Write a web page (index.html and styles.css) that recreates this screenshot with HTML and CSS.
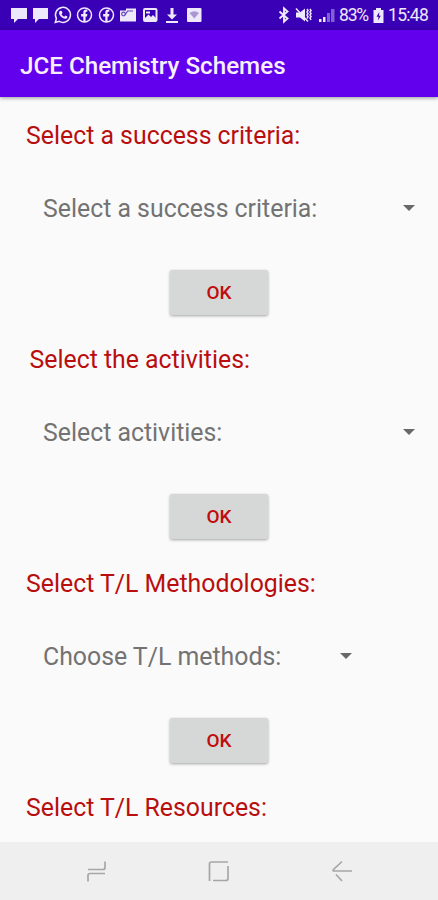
FILE: index.html
```html
<!DOCTYPE html>
<html lang="en">
<head>
<meta charset="utf-8">
<title>JCE Chemistry Schemes</title>
<link rel="stylesheet" href="styles.css">
</head>
<body>
<div class="screen">
  <header class="status">
    <div class="notices">
      <svg viewBox="0 0 22 20"><path class="fill" d="M3 3h16v11h-9l-4 4v-4H3z"/></svg>
      <svg viewBox="0 0 22 20"><path class="fill" d="M3 3h15v11H9l-4 4v-4H3z"/></svg>
      <svg viewBox="0 0 22 20"><path class="line" d="M3.300 17.500l1.100-4A7.500 7.500 0 1 1 7.300 16.400z"/><path class="fill" d="M8.300 5.800l1.500.2.7 2-1 1.200c.7 1.300 1.500 2 2.800 2.500l1.100-1.200 2 1c.1 1.500-1 2.300-2.200 2.300-3.200-.2-6.400-3.600-6.200-6.200.1-.8.6-1.500 1.300-1.800z"/></svg>
      <svg viewBox="0 0 22 20"><circle class="line" cx="10.500" cy="10" r="7"/><path class="fill" d="M9.300 17v-5.500H7.100V9h2.200V7.500c0-2.200 1.200-3.200 4-2.800v2c-1.500-.1-1.700.3-1.700 1V9h1.800l-.4 2.500h-1.400V17z"/></svg>
      <svg viewBox="0 0 22 20"><circle class="line" cx="10.500" cy="10" r="7"/><path class="fill" d="M9.300 17v-5.500H7.100V9h2.200V7.500c0-2.200 1.200-3.200 4-2.800v2c-1.500-.1-1.700.3-1.700 1V9h1.800l-.4 2.500h-1.400V17z"/></svg>
      <svg viewBox="0 0 22 20"><path class="fill" d="M2 5.500h6V3.500h10v13H2z"/><circle class="ink" cx="5.500" cy="9" r="1.800"/><path class="ink" d="M7 10l3-4.500M10 6h5"/></svg>
      <svg viewBox="0 0 22 20"><rect class="line thick" x="4" y="4" width="12.500" height="12" rx="1"/><path class="fill" d="M5 13l3.500-3.500 2.500 2.500 2-2 3.500 3.500v2H5zM6 6.500h4v2H6z"/></svg>
      <svg viewBox="0 0 22 20"><path class="fill" d="M8.500 3h3v6.500H15l-5 5-5-5h3.500zM4 16h12v2H4z"/></svg>
      <svg viewBox="0 0 22 20"><rect class="fill" x="3" y="3" width="14.500" height="14" rx="1"/><path class="signal" d="M5.500 8q4.800-3.500 9.500 0l-4.700 5.500z"/></svg>
    </div>
    <div class="system">
      <svg class="bt" viewBox="0 0 12 20"><path class="line bold" d="M1.500 6.500l8 7L6 16.700V3.300l3.500 3.200-8 7"/></svg>
      <svg class="mute" viewBox="0 0 17 20"><path class="fill" d="M1 7.500h4l5-4v13l-5-4H1z"/><path class="line" d="M1 3.500l12 13M12 4l1 1.500L12 7l1 1.500-1 1.500 1 1.500-1 2M15 4l1 1.500L15 7l1 1.500-1 1.500 1 1.500-1 1.500 1 2"/></svg>
      <svg class="cell" viewBox="0 0 17 20"><path class="fill" d="M1 14h2.500v3H1zM5 12h2.500v5H5z"/><path class="faint" d="M9 8h3v9H9zM13 4h3.500v13H13z"/></svg>
      <span class="percent">83%</span>
      <svg class="battery" viewBox="0 0 11 20"><path class="fill" d="M3 3h5v2h2.500v13H.5V5H3z"/><path class="bolt" d="M6.300 7L3.500 11.700h2L5 15.500l2.800-4.700H6z"/></svg>
      <span class="time">15:48</span>
    </div>
  </header>
  <div class="appbar"><h1>JCE Chemistry Schemes</h1></div>
  <main>
    <section>
      <h2>Select a success criteria:</h2>
      <div class="spinner"><span>Select a success criteria:</span><i class="caret"></i></div>
      <button>OK</button>
    </section>
    <section>
      <h2 class="inset">Select the activities:</h2>
      <div class="spinner"><span>Select activities:</span><i class="caret"></i></div>
      <button>OK</button>
    </section>
    <section>
      <h2>Select T/L Methodologies:</h2>
      <div class="spinner short"><span>Choose T/L methods:</span><i class="caret"></i></div>
      <button>OK</button>
    </section>
    <section>
      <h2>Select T/L Resources:</h2>
    </section>
  </main>
  <nav>
    <svg viewBox="0 0 24 24"><path d="M3 10.500h15q2 0 2-2v-6M20 14.500H5q-2 0-2 2v6"/></svg>
    <svg viewBox="0 0 24 24"><path d="M2.500 22V5q0-2 2-2H21M21 7v12.500q0 2-2 2H6"/></svg>
    <svg viewBox="0 0 24 24"><path d="M13 2.500L4.500 10.500q-1 1.500.5 1.500H23M7 15.500l6 6.500"/></svg>
  </nav>
</div>
</body>
</html>
```
FILE: styles.css
```css
* { box-sizing: border-box; }
body { margin: 0; font-family: Roboto, "Liberation Sans", sans-serif; }
.screen { display: flex; flex-direction: column; width: 438px; height: 900px; overflow: hidden; background: #fafafa; }
.status { display: flex; flex: 0 0 30px; justify-content: space-between; padding: 5px 9px 5px 8px; background: #3a00b5; color: #eee8fc; }
.notices, .system { display: flex; align-items: center; }
.notices svg { width: 22px; height: 20px; }
.system svg { height: 20px; }
.fill { fill: #eee8fc; }
.line { fill: none; stroke: #eee8fc; stroke-width: 1.5; }
.thick { stroke-width: 2; }
.bold { stroke-width: 1.9; }
.ink { fill: none; stroke: #6545b8; stroke-width: 1.2; }
.signal { fill: #a898cf; }
.faint { fill: #8060d5; }
.bolt { fill: #3a00b5; }
.bt { width: 12px; margin-right: 5px; }
.mute { width: 17px; margin-right: 6px; }
.cell { width: 17px; margin-right: 4px; }
.battery { width: 11px; margin-right: 4px; }
.percent, .time { font-size: 17.500px; line-height: 20px; white-space: nowrap; }
.percent { width: 34px; letter-spacing: -1.2px; }
.time { width: 41px; letter-spacing: -0.7px; }
.appbar { z-index: 1; display: flex; flex: 0 0 67px; align-items: center; padding: 4px 20px 0; background: #6200ee; box-shadow: 0 1px 4px rgba(0, 0, 0, .4); }
h1 { margin: 0; color: #f7efff; font-size: 24.200px; font-weight: 500; line-height: 32px; white-space: nowrap; }
main { flex: 1; min-height: 0; padding-top: 15px; overflow: hidden; }
section { display: flex; flex-direction: column; height: 224px; }
h2 { margin: 0; padding-left: 26px; color: #b90e0e; font-size: 24.850px; font-weight: 400; line-height: 47px; white-space: nowrap; }
h2.inset { padding-left: 29.500px; }
.spinner { display: flex; align-items: center; justify-content: space-between; height: 98px; padding: 0 23px 0 43px; color: #737373; font-size: 24.850px; }
.spinner.short { width: 375px; }
.caret { width: 12px; height: 6px; background: #686868; clip-path: polygon(0 0, 100% 0, 50% 100%); }
button { align-self: center; width: 98px; height: 45px; margin-top: 13px; padding: 0; border: 0; border-radius: 2px; background: #d6d8d7; box-shadow: 0 1px 3px rgba(0, 0, 0, .35); color: #c00c0c; font: 500 19px Roboto, sans-serif; }
nav { display: flex; flex: 0 0 58px; align-items: center; gap: 98px; padding-left: 85px; background: #efefef; }
nav svg { width: 24px; height: 24px; fill: none; stroke: #a6a6a6; stroke-width: 1.7; }
```
